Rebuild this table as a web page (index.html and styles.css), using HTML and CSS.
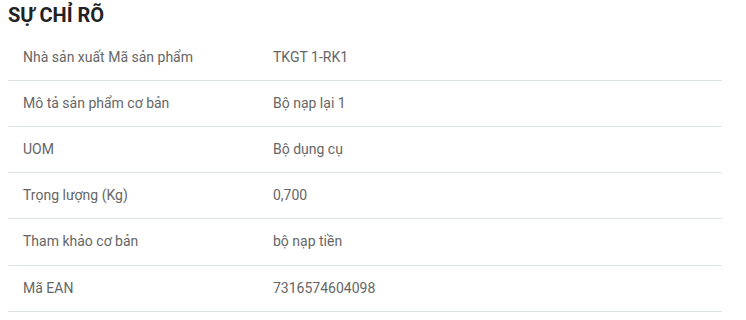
FILE: index.html
```html
<!DOCTYPE html>
<html lang="vi">
<head>
<meta charset="utf-8">
<link rel="stylesheet" href="styles.css">
</head>
<body>
<div class="wrap">
  <h2 class="title">SỰ CHỈ RÕ</h2>
  <div class="specs">
    <div class="row"><div class="label">Nhà sản xuất Mã sản phẩm</div><div class="value">TKGT 1-RK1</div></div>
    <div class="row"><div class="label">Mô tả sản phẩm cơ bản</div><div class="value">Bộ nạp lại 1</div></div>
    <div class="row"><div class="label">UOM</div><div class="value">Bộ dụng cụ</div></div>
    <div class="row"><div class="label">Trọng lượng (Kg)</div><div class="value">0,700</div></div>
    <div class="row"><div class="label">Tham khảo cơ bản</div><div class="value">bộ nạp tiền</div></div>
    <div class="row"><div class="label">Mã EAN</div><div class="value">7316574604098</div></div>
  </div>
</div>
</body>
</html>
```
FILE: styles.css
```css
html, body {
  margin: 0;
  padding: 0;
  background: #fff;
}
body {
  font-family: Roboto, "Liberation Sans", sans-serif;
}
.wrap {
  padding: 3px 24px 0 8px;
}
.title {
  margin: 0 0 7.6px 0;
  font-size: 20px;
  line-height: 24px;
  font-weight: 700;
  color: #222;
}
.specs {
  display: flex;
  flex-direction: column;
}
.row {
  display: grid;
  grid-template-columns: 265px 1fr;
  padding: 12.1px 0;
  border-bottom: 1px solid #dde2e2;
  font-size: 14px;
  line-height: 21px;
  color: #666;
}
.label {
  padding-left: 15px;
}
```
